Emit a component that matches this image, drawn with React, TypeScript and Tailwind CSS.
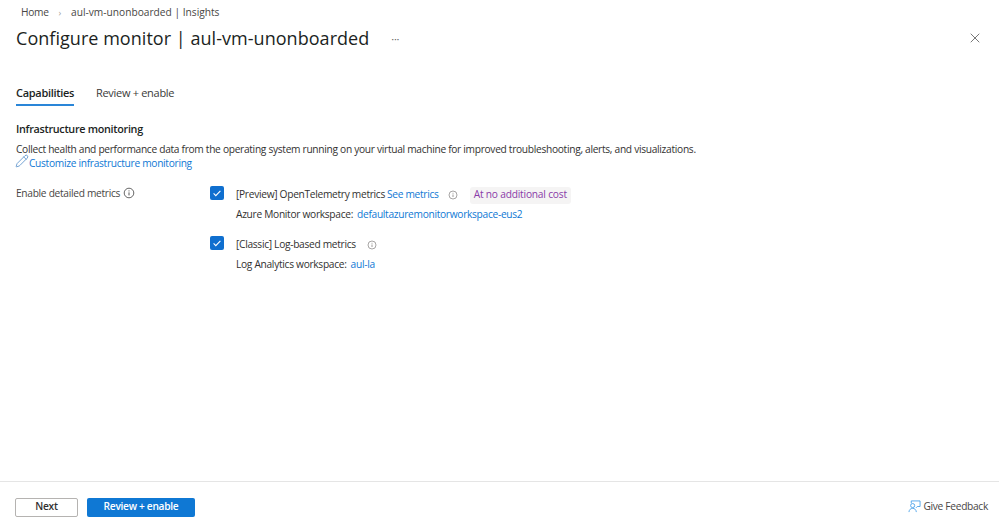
import { Pencil, X } from "lucide-react";

const font = { fontFamily: '"Open Sans", "Noto Sans", sans-serif' };

function InfoIcon({ className }: { className?: string }) {
	return (
		<svg viewBox="0 0 12 12" className={className} fill="none" stroke="currentColor">
			<circle cx="6" cy="6" r="4.8" strokeWidth="0.9" />
			<path d="M6 5.400v3" strokeWidth="1" />
			<path d="M6 3.400v1" strokeWidth="1" />
		</svg>
	);
}

function Check() {
	return (
		<div className="w-[14px] h-[14px] rounded-[2px] bg-[#0f6fcf] flex items-center justify-center shrink-0">
			<svg viewBox="0 0 14 14" className="w-[14px] h-[14px]" fill="none" stroke="#fff" strokeWidth="1.1">
				<path d="M3.600 7.400l2.200 2.200 4.600-4.800" />
			</svg>
		</div>
	);
}

function FeedbackIcon() {
	return (
		<svg viewBox="0 0 14 14" className="w-[13px] h-[13px] text-[#3f9be8]" fill="none" stroke="currentColor" strokeWidth="0.9">
			<path d="M3.500 3.500V1h9.500v6H10l-1.500 1.500" />
			<circle cx="5" cy="6" r="2.2" />
			<path d="M1 13c.3-2.600 1.800-4 4-4s3.700 1.400 4 4" />
		</svg>
	);
}

export default function App() {
	return (
		<div style={font} className="w-[999px] h-[529px] bg-white flex flex-col overflow-hidden text-[#323130] text-[10.2px] tracking-[-0.3px]">
			<div className="flex-1 px-4">
				<div className="flex items-center pt-[5px] pl-[5px] h-[20px] text-[#484644]">
					<span>Home</span>
					<span className="ml-[10px] mr-[10px] text-[#a19f9d] text-[9px]">›</span>
					<span className="tracking-normal">aul-vm-unonboarded | Insights</span>
				</div>
				<div className="flex items-center h-[36px]">
					<h1 className="text-[18px] font-medium text-[#201f1e] tracking-[0.04px]">Configure monitor | aul-vm-unonboarded</h1>
					<span className="ml-[22px] text-[#666] text-[11px] leading-none">···</span>
					<X className="ml-auto w-[16px] h-[16px] text-[#555]" strokeWidth={1.2} />
				</div>

				<div className="flex mt-[29px] h-[23px] gap-[22px] items-start">
					<div className="h-[21px] w-[58px] border-b-2 border-[#2a86d8] text-[11px] font-semibold text-center text-[#201f1e] whitespace-nowrap">Capabilities</div>
					<div className="text-[11px] text-[#3b3a39]">Review + enable</div>
				</div>

				<div className="mt-[13px] text-[10.8px] font-semibold text-[#201f1e] leading-[16px]">Infrastructure monitoring</div>
				<div className="mt-[4px] leading-[16px] text-[#323130]">
					Collect health and performance data from the operating system running on your virtual machine for improved troubleshooting, alerts, and visualizations.
				</div>
				<div className="flex items-center leading-[14px] -mt-[1px] text-[#0f78d4]">
					<Pencil className="w-[14px] h-[14px] -mt-[4px] -ml-[1px] text-[#3a7bc0]" strokeWidth={1.2} />
					<span>Customize infrastructure monitoring</span>
				</div>

				<div className="flex mt-[16px]">
					<div className="w-[194px] flex items-start text-[#484644] gap-[3px]">
						<span className="leading-[14px]">Enable detailed metrics</span>
						<InfoIcon className="w-[12px] h-[12px] mt-[1px] text-[#555]" />
					</div>
					<div className="flex flex-col">
						<div className="flex gap-[12px]">
							<Check />
							<div>
								<div className="flex items-center h-[18px]">
									<span>[Preview] OpenTelemetry metrics</span>
									<span className="ml-[2px] text-[#0f78d4]">See metrics</span>
									<InfoIcon className="ml-[9px] w-[10px] h-[10px] text-[#8a8886]" />
									<span className="ml-[12px] px-[4px] h-[17px] flex items-center rounded-[3px] bg-[#f5f4f4] text-[#8a3aa8] tracking-[-0.2px]">At no additional cost</span>
								</div>
								<div className="mt-[2px] leading-[16px]">
									<span>Azure Monitor workspace:</span>
									<span className="ml-[4px] text-[#0f78d4]">defaultazuremonitorworkspace-eus2</span>
								</div>
							</div>
						</div>
						<div className="flex gap-[12px] mt-[14px]">
							<Check />
							<div>
								<div className="flex items-center h-[18px]">
									<span>[Classic] Log-based metrics</span>
									<InfoIcon className="ml-[11px] w-[10px] h-[10px] text-[#8a8886]" />
								</div>
								<div className="mt-[2px] leading-[16px]">
									<span>Log Analytics workspace:</span>
									<span className="ml-[4px] text-[#0f78d4]">aul-la</span>
								</div>
							</div>
						</div>
					</div>
				</div>
			</div>

			<div className="h-[48px] border-t border-[#e5e5e5] flex items-center px-[15px] pt-[3px]">
				<button className="w-[63px] h-[19px] border border-[#b5b3b1] rounded-[2px] font-semibold text-[#323130] flex items-center justify-center">Next</button>
				<button className="ml-[9px] w-[108px] h-[19px] rounded-[2px] bg-[#0f78d4] text-white font-semibold flex items-center justify-center">Review + enable</button>
				<div className="ml-auto mr-[-4px] flex items-center gap-[2px] text-[#484644]">
					<FeedbackIcon />
					<span>Give Feedback</span>
				</div>
			</div>
		</div>
	);
}
